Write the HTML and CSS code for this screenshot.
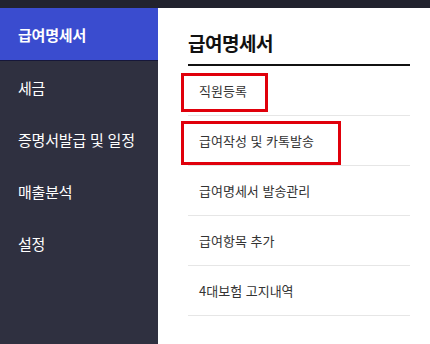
FILE: index.html
```html
<!DOCTYPE html>
<html lang="ko">
<head>
    <meta charset="UTF-8">
    <meta name="viewport" content="width=device-width, initial-scale=1.0">
    <title>급여명세서</title>
    <link rel="stylesheet" href="styles.css">
</head>
<body>

    <div class="topbar"></div>

    <div class="layout">
        <!-- 왼쪽 메뉴 -->
        <div class="sidebar">
            <div class="menu-item active">급여명세서</div>
            <div class="menu-item">세금</div>
            <div class="menu-item">증명서발급 및 일정</div>
            <div class="menu-item">매출분석</div>
            <div class="menu-item">설정</div>
        </div>

        <!-- 서브 메뉴 -->
        <div class="content">
            <h2 class="title">급여명세서</h2>
            <ul class="sub-list">
                <li class="mark mark-short">직원등록</li>
                <li class="mark mark-long">급여작성 및 카톡발송</li>
                <li>급여명세서 발송관리</li>
                <li>급여항목 추가</li>
                <li>4대보험 고지내역</li>
            </ul>
        </div>
    </div>

</body>
</html>
```

FILE: styles.css
```css
* {
    box-sizing: border-box;
}
body {
    margin: 0;
    font-family: "Noto Sans CJK KR", "Noto Sans", sans-serif;
    background-color: #fff;
}
.topbar {
    height: 8px;
    background-color: #22232e;
}
.layout {
    display: flex;
    height: 336px;
}
.sidebar {
    width: 158px;
    background-color: #2f3040;
}
.menu-item {
    height: 52px;
    display: flex;
    align-items: center;
    padding-left: 18px;
    color: #fff;
    font-size: 15px;
    letter-spacing: -0.2px;
}
.menu-item.active {
    background-color: #3a4ccf;
    font-weight: bold;
    border-bottom: 1px solid #16173a;
    height: 53px;
}
.content {
    flex: 1;
    padding-left: 30px;
}
.title {
    width: 222px;
    margin: 0;
    padding-top: 21px;
    height: 58px;
    font-size: 19px;
    letter-spacing: -0.5px;
    color: #111;
    border-bottom: 2px solid #111;
}
.sub-list {
    width: 222px;
    margin: 0;
    padding: 0;
    list-style: none;
}
.sub-list li {
    position: relative;
    height: 50px;
    display: flex;
    align-items: center;
    padding-left: 11px;
    border-bottom: 1px solid #e6e6e6;
    font-size: 13px;
    letter-spacing: 0;
    color: #333;
}
.mark::after {
    content: "";
    position: absolute;
    left: -7px;
    border: 3px solid #e0000b;
}
.mark-short::after {
    top: 7px;
    width: 81px;
    height: 33px;
}
.mark-long::after {
    top: 5px;
    width: 154px;
    height: 38px;
}
```
